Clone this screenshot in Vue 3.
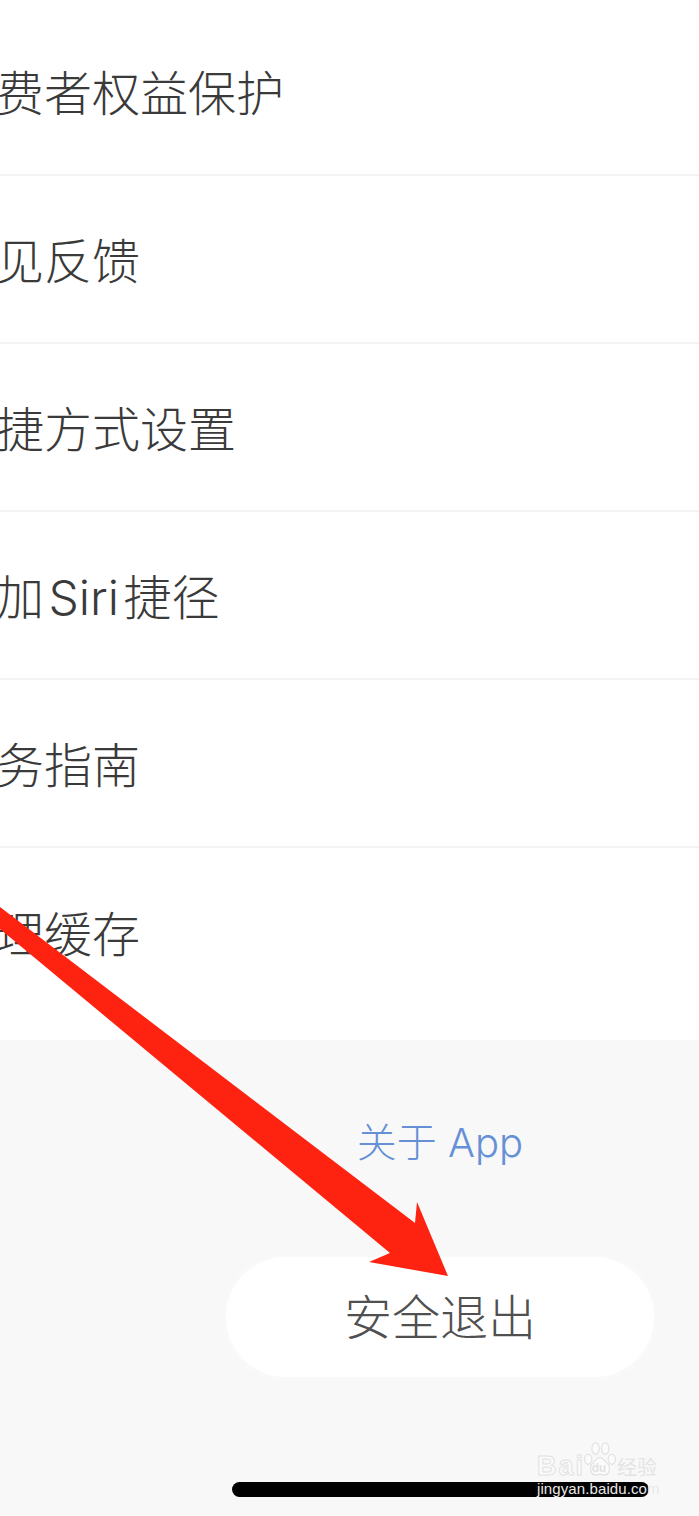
<template>
  <div class="page">
    <ul class="menu">
      <li v-for="item in menu" :key="item" class="menu-row">
        <span class="menu-label">{{ item }}</span>
      </li>
    </ul>

    <div class="footer">
      <a class="about">关于 App</a>
      <button class="logout">安全退出</button>
      <div class="home-bar"></div>
    </div>

    <!-- red annotation arrow drawn on top of the screenshot -->
    <svg class="arrow" width="699" height="1516" viewBox="0 0 699 1516">
      <polygon
        points="0,907 415,1223 417,1202 448,1276 369,1262 390,1253 0,929"
        fill="#fe2211"
      />
    </svg>

    <div class="watermark">
      <div class="wm-top">
        <span class="wm-bai">Bai</span>
        <svg class="wm-paw" width="34" height="38" viewBox="0 0 46 46" preserveAspectRatio="none">
          <g fill="#fbfbfb" stroke="#e2e2e2" stroke-width="1.6">
            <ellipse cx="7" cy="21" rx="5" ry="6" />
            <ellipse cx="17" cy="8" rx="5" ry="7" />
            <ellipse cx="30" cy="8" rx="5" ry="7" />
            <ellipse cx="39" cy="21" rx="5" ry="6" />
            <path d="M23 19c-5 0-6 4-10 7-5 4-3 14 4 14 3 0 4-1 6-1s3 1 6 1c7 0 9-10 4-14-4-3-5-7-10-7z" />
          </g>
          <text x="12" y="36" class="wm-du">du</text>
        </svg>
        <span class="wm-cn">经验</span>
      </div>
      <div class="wm-url">jingyan.baidu.com</div>
    </div>
  </div>
</template>

<script setup>
const menu = [
  "消费者权益保护",
  "意见反馈",
  "快捷方式设置",
  "添加 Siri 捷径",
  "服务指南",
  "清理缓存",
];
</script>

<style>
html,
body {
  margin: 0;
  overflow: hidden;
}
</style>

<style scoped>
.page {
  position: relative;
  width: 699px;
  height: 1516px;
  overflow: hidden;
  display: flex;
  flex-direction: column;
  background: #fff;
  font-family: Inter, "Noto Sans CJK SC", sans-serif;
}

.menu {
  list-style: none;
  margin: 0;
  padding: 8px 0 0;
  height: 1040px;
  box-sizing: border-box;
}

.menu-row {
  height: 168px;
  box-sizing: border-box;
  display: flex;
  align-items: center;
  border-bottom: 2px solid #f3f3f3;
  white-space: nowrap;
}

.menu-row:last-child {
  border-bottom: none;
}

.menu-label {
  margin-left: -52px;
  margin-top: 6px;
  font-size: 48px;
  font-weight: 300;
  line-height: 60px;
  word-spacing: -9px;
  color: #3a3a3a;
}

.footer {
  flex: 1;
  display: flex;
  flex-direction: column;
  align-items: center;
  background: #f8f8f8;
  padding-left: 181px;
}

.about {
  margin-top: 76px;
  font-size: 40px;
  font-weight: 300;
  line-height: 54px;
  color: #6690d6;
}

.logout {
  margin-top: 87px;
  width: 428px;
  height: 120px;
  padding: 0 0 6px;
  border: none;
  border-radius: 60px;
  background: #fff;
  box-shadow: 0 0 6px #fbfbfb;
  font: inherit;
  font-size: 48px;
  font-weight: 300;
  color: #505050;
}

.home-bar {
  margin-top: 105px;
  width: 417px;
  height: 15px;
  border-radius: 8px;
  background: #000;
}

.arrow {
  position: absolute;
  left: 0;
  top: 0;
  pointer-events: none;
}

.watermark {
  position: absolute;
  left: 537px;
  top: 1441px;
  width: 130px;
}

.wm-top {
  display: flex;
  align-items: flex-end;
  height: 39px;
  color: #e4e4e4;
}

.wm-bai {
  font-family: "Liberation Sans", sans-serif;
  font-size: 27px;
  font-weight: 700;
  line-height: 28px;
  letter-spacing: 2px;
  color: #fbfbfb;
  -webkit-text-stroke: 1px #e2e2e2;
}

.wm-paw {
  margin-left: -2px;
  flex: none;
}

.wm-du {
  font-family: "Liberation Sans", sans-serif;
  font-size: 16px;
  font-weight: 700;
  fill: #e2e2e2;
}

.wm-cn {
  font-family: "Noto Sans CJK SC", sans-serif;
  font-size: 20px;
  line-height: 26px;
}

.wm-url {
  font-family: "Liberation Sans", sans-serif;
  font-size: 15px;
  line-height: 18px;
  letter-spacing: 0.1px;
  color: #e8e8e8;
  white-space: nowrap;
}
</style>
